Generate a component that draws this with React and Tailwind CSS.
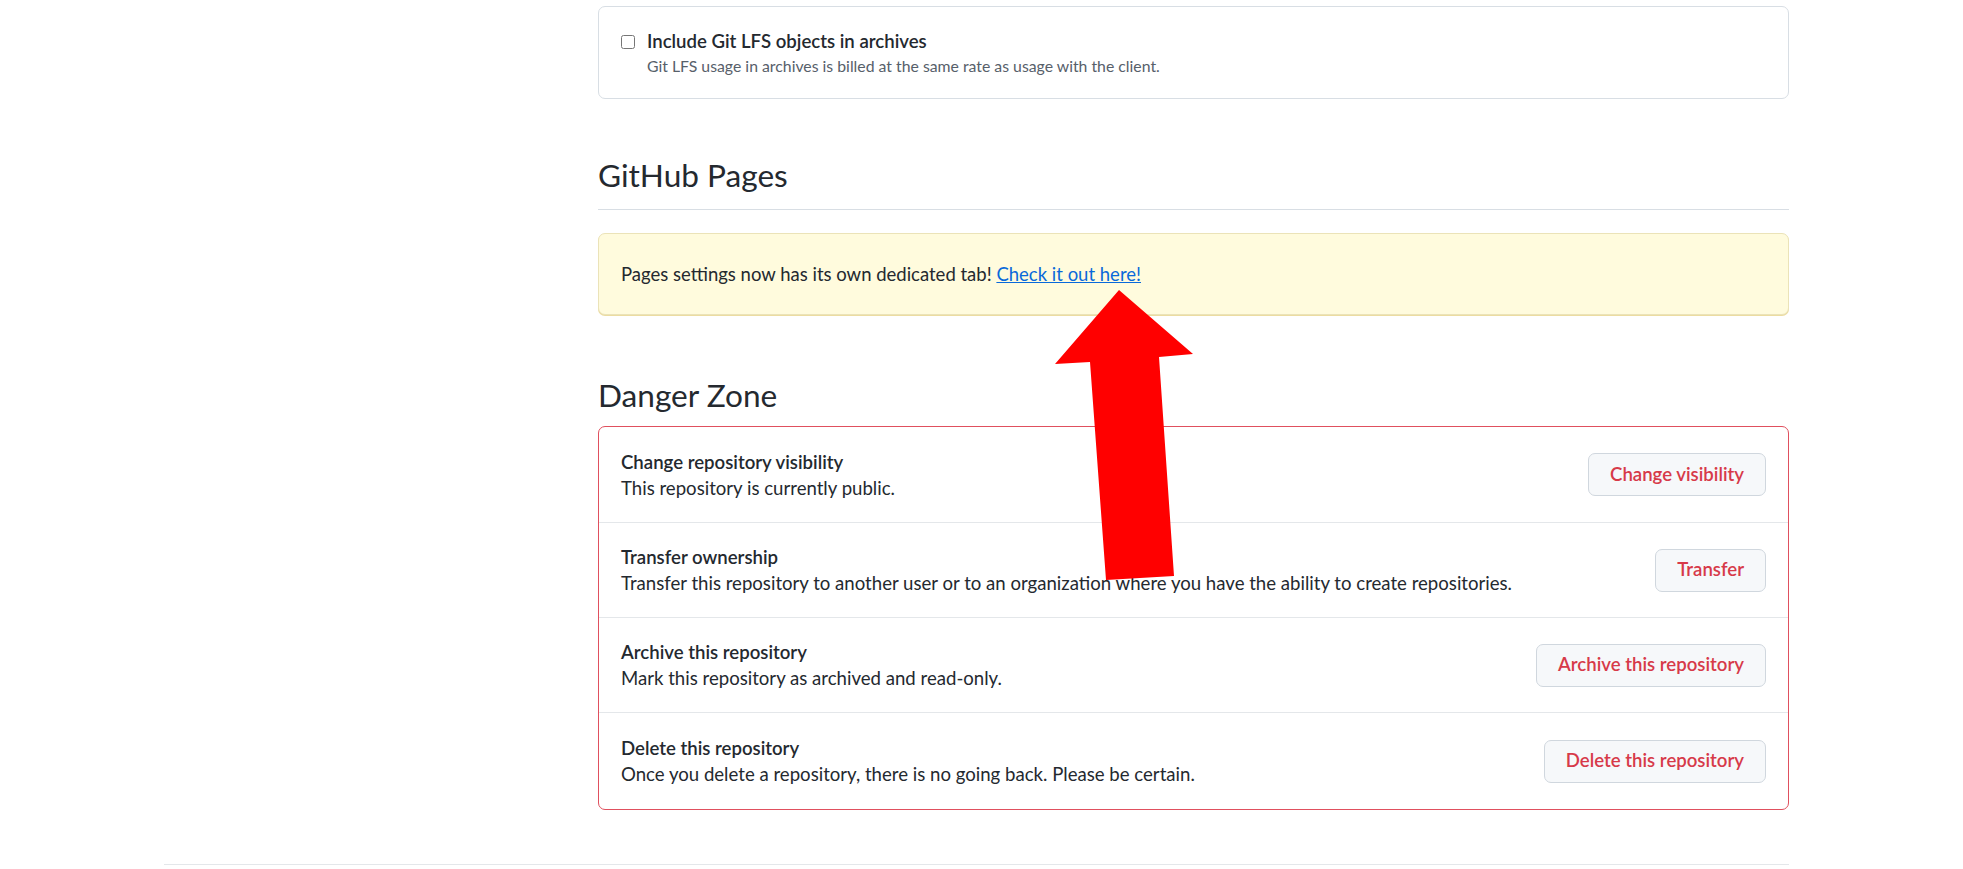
import React from 'react';

const rows = [
  {
    title: 'Change repository visibility',
    desc: 'This repository is currently public.',
    action: 'Change visibility',
  },
  {
    title: 'Transfer ownership',
    desc: 'Transfer this repository to another user or to an organization where you have the ability to create repositories.',
    action: 'Transfer',
  },
  {
    title: 'Archive this repository',
    desc: 'Mark this repository as archived and read-only.',
    action: 'Archive this repository',
  },
  {
    title: 'Delete this repository',
    desc: 'Once you delete a repository, there is no going back. Please be certain.',
    action: 'Delete this repository',
  },
];

// Red annotation arrow drawn on top of the screenshot
const Arrow = () => (
  <svg
    className="absolute left-0 top-0 pointer-events-none"
    width="1963"
    height="869"
    viewBox="0 0 1963 869"
  >
    <polygon
      points="1119,290 1193,354 1159,357 1174,576 1106,580 1090,362 1055,364"
      fill="#ff0000"
    />
  </svg>
);

const App = () => {
  return (
    <div className="relative h-[869px] w-full overflow-hidden bg-white font-['Lato','Noto_Sans',sans-serif] text-[#24292f]">
      <div className="ml-[164px] w-[1625px] border-b border-[#e4e7ea] pb-[54px]">
        <div className="flex">
          {/* sidebar column (scrolled out of view) */}
          <div className="w-[434px] shrink-0"></div>

          <div className="flex-1 pt-[6px]">
            {/* Git LFS option */}
            <div className="rounded-[7px] border border-[#d8dee4] px-[22px] pt-[21px] pb-[21px]">
              <div className="flex items-center gap-[12px]">
                <input type="checkbox" className="h-[14px] w-[14px]" />
                <label className="text-[18.6px] font-semibold leading-[27px]">Include Git LFS objects in archives</label>
              </div>
              <p className="pl-[26px] text-[15.8px] leading-[22px] text-[#57606a]">
                Git LFS usage in archives is billed at the same rate as usage with the client.
              </p>
            </div>

            {/* GitHub Pages */}
            <h2 className="mt-[54px] border-b border-[#d8dee4] pb-[11px] text-[31.6px] font-normal leading-[45px]">GitHub Pages</h2>
            <div className="mt-[23px] rounded-[7px] border border-[#ebe3b8] bg-[#fffbdd] px-[22px] py-[27px] shadow-[0_1px_0_#ecdca1]">
              <p className="text-[18.5px] leading-[26px]">
                Pages settings now has its own dedicated tab!{' '}
                <a href="#" className="text-[#0969da] underline">Check it out here!</a>
              </p>
            </div>

            {/* Danger Zone */}
            <h2 className="mt-[58px] text-[31.6px] font-normal leading-[45px]">Danger Zone</h2>
            <div className="mt-[8px] rounded-[7px] border border-[#e0505e]">
              {rows.map((row, i) => (
                <div
                  key={row.title}
                  className={`flex items-center justify-between px-[22px] ${i > 0 ? 'border-t border-[#e4e7ea]' : ''} ${i === rows.length - 1 ? 'h-[97px]' : 'h-[95px]'}`}
                >
                  <div>
                    <div className="text-[18.6px] font-semibold leading-[26px]">{row.title}</div>
                    <div className="text-[18.6px] leading-[26px]">{row.desc}</div>
                  </div>
                  <button className="h-[43px] rounded-[7px] border border-[#d0d7de] bg-[#f6f8fa] px-[21px] text-[18.6px] font-semibold text-[#d73a49]">
                    {row.action}
                  </button>
                </div>
              ))}
            </div>
          </div>
        </div>
      </div>
      <Arrow />
    </div>
  );
};

export default App;
